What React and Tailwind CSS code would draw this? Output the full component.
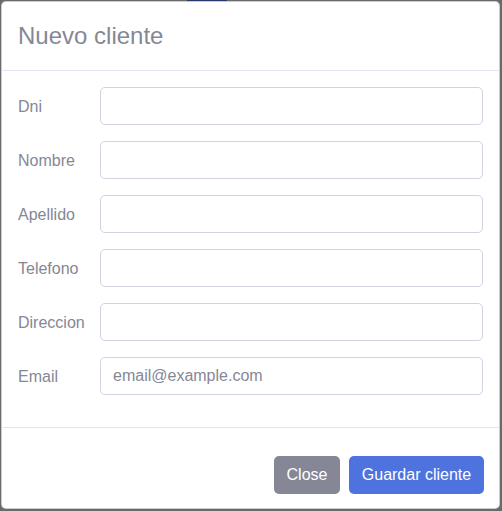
const fields = [
  { label: 'Dni' },
  { label: 'Nombre' },
  { label: 'Apellido' },
  { label: 'Telefono' },
  { label: 'Direccion' },
  { label: 'Email', placeholder: 'email@example.com', type: 'email' },
]

export default function App() {
  return (
    <div className="relative h-[511px] w-[502px] overflow-hidden bg-[#6a6a6b] pl-[1px] pt-[1px] font-['Liberation_Sans',Arial,sans-serif]">
      {/* page behind the backdrop */}
      <div className="absolute left-[187px] top-0 h-[2px] w-[40px] bg-[#26386d]" />

      <div className="relative flex h-[508px] w-[499px] flex-col rounded-[5px] border border-black/20 bg-white">
        <div className="flex h-[69px] items-center border-b border-[#e3e6f0] px-[16px]">
          <h5 className="text-[24px] leading-none text-[#858796]">Nuevo cliente</h5>
        </div>

        <form className="flex flex-col gap-4 border-b border-[#e3e6f0] px-[16px] pb-8 pt-4">
          {fields.map((f) => (
            <div key={f.label} className="flex">
              <label className="w-[82px] pt-[8px] text-[16px] leading-6 text-[#858796]">
                {f.label}
              </label>
              <input
                type={f.type || 'text'}
                placeholder={f.placeholder}
                className="h-[38px] w-[383px] rounded-[5px] border border-[#d1d3e2] px-3 text-[16px] text-[#6e707e] outline-none placeholder:text-[#858796]"
              />
            </div>
          ))}
        </form>

        <div className="flex justify-end gap-[9px] px-[15px] pt-[28px]">
          <button
            type="button"
            className="h-[38px] w-[66px] rounded-[5px] bg-[#858796] text-[16px] text-white"
          >
            Close
          </button>
          <button
            type="button"
            className="h-[38px] w-[135px] rounded-[5px] bg-[#4e73df] text-[16px] text-white"
          >
            Guardar cliente
          </button>
        </div>
      </div>
    </div>
  )
}
